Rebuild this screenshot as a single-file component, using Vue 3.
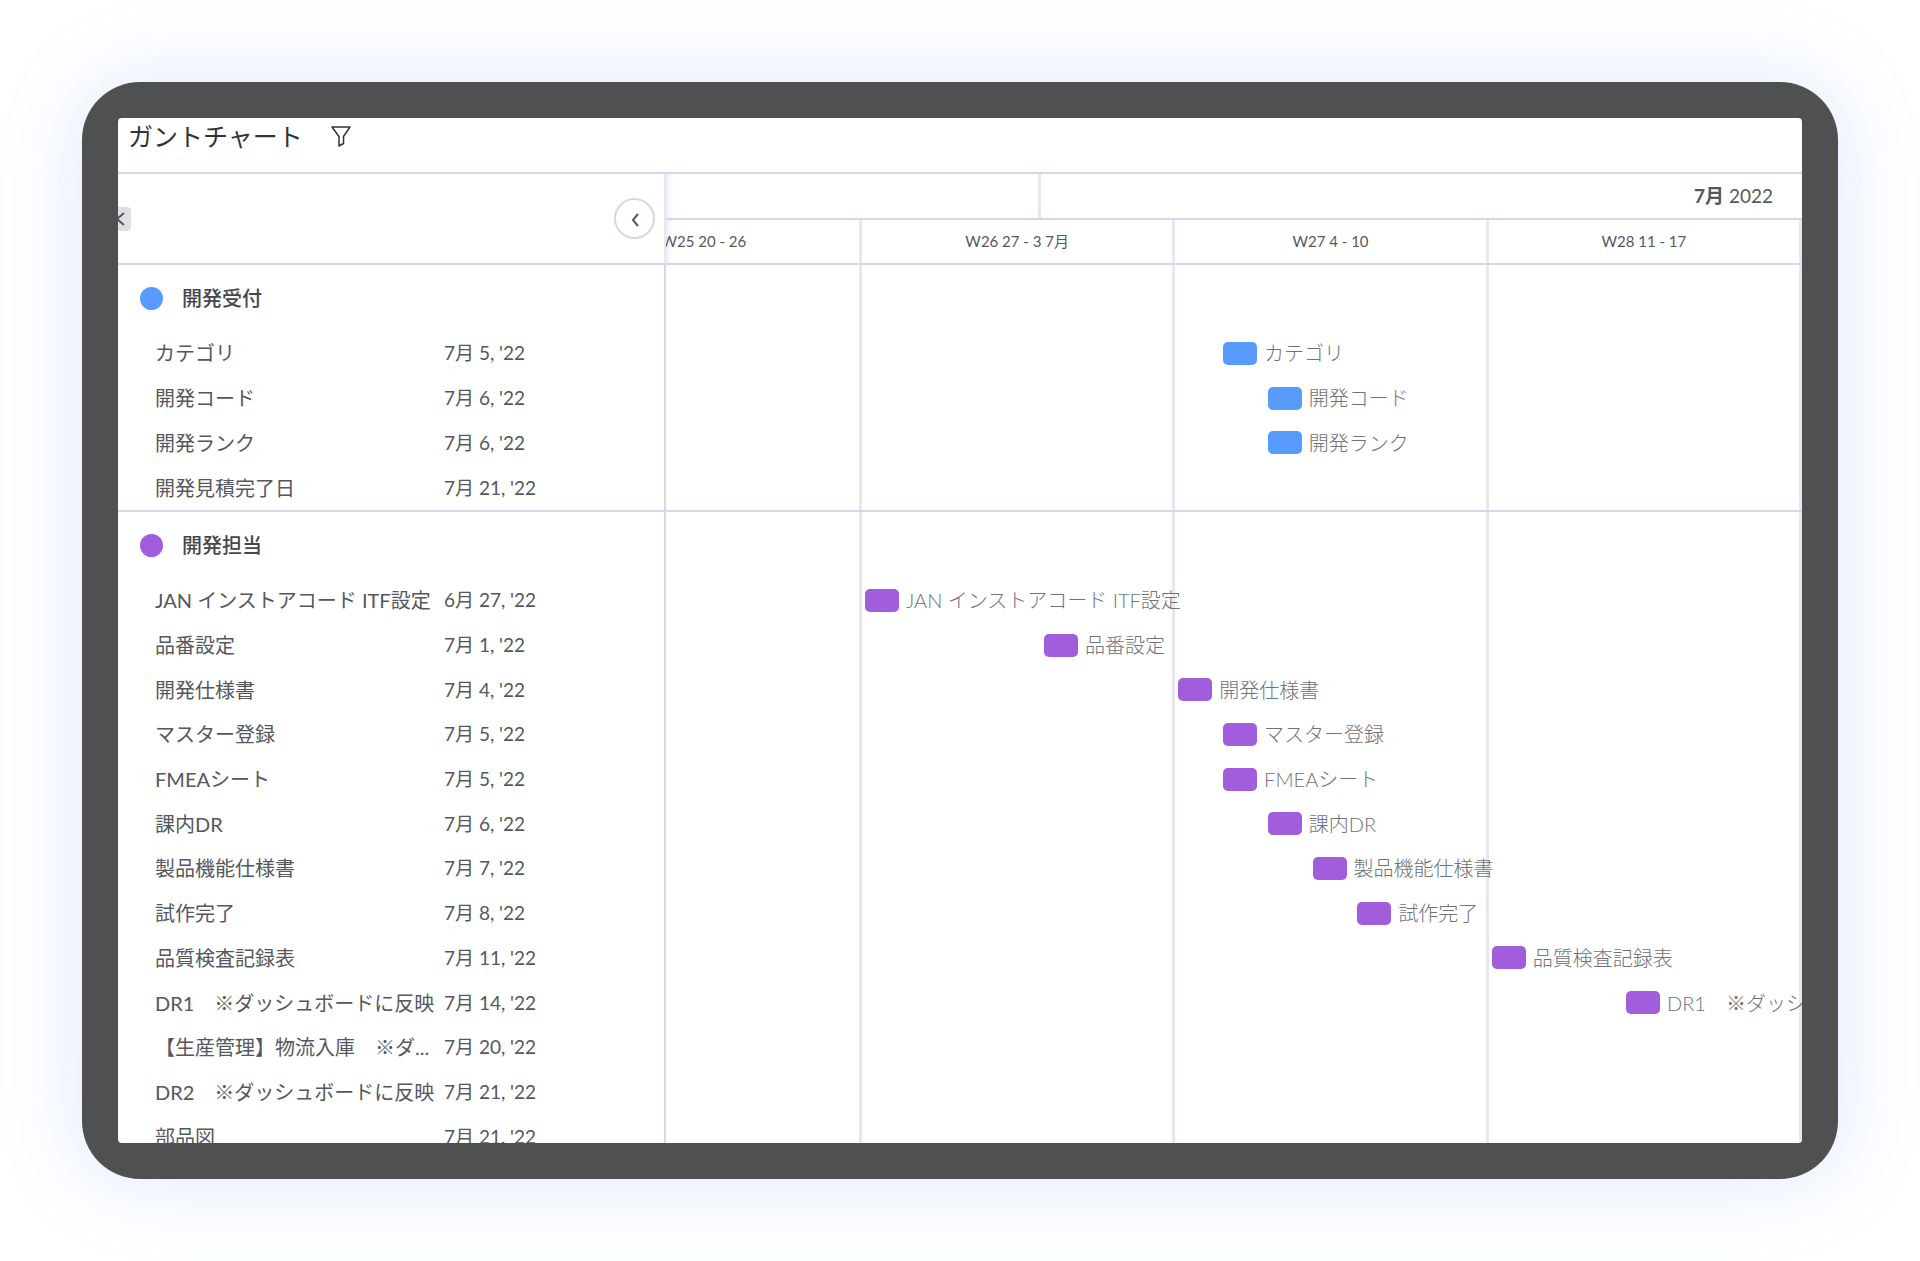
<script setup>
const FIRST_DAY = new Date(2022, 5, 27)

const weeks = ['W25 20 - 26', 'W26 27 - 3 7月', 'W27 4 - 10', 'W28 11 - 17']

const task = (name, month, day) => ({ name, month, day })

const groups = [
  {
    title: '開発受付',
    tone: 'blue',
    height: 245,
    tasks: [
      task('カテゴリ', 7, 5),
      task('開発コード', 7, 6),
      task('開発ランク', 7, 6),
      task('開発見積完了日', 7, 21)
    ]
  },
  {
    title: '開発担当',
    tone: 'purple',
    height: 649,
    tasks: [
      task('JAN インストアコード ITF設定', 6, 27),
      task('品番設定', 7, 1),
      task('開発仕様書', 7, 4),
      task('マスター登録', 7, 5),
      task('FMEAシート', 7, 5),
      task('課内DR', 7, 6),
      task('製品機能仕様書', 7, 7),
      task('試作完了', 7, 8),
      task('品質検査記録表', 7, 11),
      task('DR1　※ダッシュボードに反映', 7, 14),
      task('【生産管理】物流入庫　※ダ...', 7, 20),
      task('DR2　※ダッシュボードに反映', 7, 21),
      task('部品図', 7, 21)
    ]
  }
]

// Days between the first full week on the timeline and the task
const dayIndex = (t) => Math.round((new Date(2022, t.month - 1, t.day) - FIRST_DAY) / 86400000)
const isVisible = (t) => dayIndex(t) < 21
const barOffset = (t) => ({ marginLeft: `calc(var(--lead) + 3px + (100% - var(--lead)) * ${dayIndex(t)} / 21)` })
</script>

<template>
  <div class="page">
    <main class="device">
      <div class="screen">
        <header class="title-bar">
          <h1>ガントチャート</h1>
          <button class="filter" type="button" aria-label="フィルター">
            <svg width="20" height="22" viewBox="0 0 20 22" fill="none" stroke="currentColor" stroke-width="1.5" stroke-linejoin="round">
              <path d="M1 2h18l-6.500 9.500v7l-4.500 2.500v-9.500z" />
            </svg>
          </button>
        </header>

        <div class="chart-head">
          <div class="side-head">
            <button class="back-tab" type="button" aria-label="戻る">
              <svg width="12" height="16" viewBox="0 0 12 16" fill="none" stroke="currentColor" stroke-width="2">
                <path d="M8 2L1 8l7 6" />
              </svg>
            </button>
            <button class="collapse" type="button" aria-label="折りたたむ">
              <svg width="10" height="16" viewBox="0 0 10 16" fill="none" stroke="currentColor" stroke-width="2">
                <path d="M8 3L3 9l5 6" />
              </svg>
            </button>
          </div>
          <div class="time-head">
            <div class="months">
              <div class="month-prev"></div>
              <div class="month"><b>7月</b>&nbsp;2022</div>
            </div>
            <div class="weeks">
              <div v-for="w in weeks" :key="w" class="week">{{ w }}</div>
            </div>
          </div>
        </div>

        <div class="chart-body">
          <div class="grid-lines">
            <div class="grid-side"></div>
            <div class="weeks">
              <div v-for="w in weeks" :key="w" class="week"></div>
            </div>
          </div>
          <table>
            <tbody v-for="g in groups" :key="g.title" :class="g.tone" :style="{ height: g.height + 'px' }">
              <tr class="group-row">
                <th scope="rowgroup"><span class="dot"></span>{{ g.title }}</th>
              </tr>
              <tr v-for="t in g.tasks" :key="t.name">
                <td class="name">{{ t.name }}</td>
                <td class="date">{{ t.month }}月 {{ t.day }}, '22</td>
                <td class="track">
                  <template v-if="isVisible(t)">
                    <span class="bar" :style="barOffset(t)"></span>
                    <span class="bar-label">{{ t.name }}</span>
                  </template>
                </td>
              </tr>
            </tbody>
          </table>
        </div>
      </div>
    </main>
  </div>
</template>

<style>
body {
  margin: 0;
  background: #fff;
}
</style>

<style scoped>
* {
  box-sizing: border-box;
}

.page {
  --side: 548px;
  --names: 322px;
  --lead: 196px;
  --line: #d3d7e8;
  --soft-line: #e5e8f2;
  height: 100vh;
  padding: 82px;
  overflow: hidden;
  font-family: Lato, "Noto Sans CJK JP", sans-serif;
  color: #55575e;
}

.device {
  height: 100%;
  padding: 36px;
  border-radius: 58px;
  background: #505050;
  box-shadow: 0 0 84px rgba(90, 147, 250, 0.22);
}

.screen {
  display: flex;
  flex-direction: column;
  height: 100%;
  overflow: hidden;
  border-radius: 4px;
  background: #fff;
}

button {
  display: flex;
  align-items: center;
  justify-content: center;
  padding: 0;
  border: 0;
  background: none;
  color: #55575e;
}

.title-bar {
  display: flex;
  flex: none;
  align-items: flex-start;
  gap: 28px;
  height: 56px;
  padding-left: 10px;
  border-bottom: 2px solid var(--line);
}

h1 {
  margin: 0;
  font-size: 25px;
  font-weight: 400;
  line-height: 36px;
  color: #323338;
}

.filter {
  height: 36px;
  color: #323338;
}

.chart-head {
  display: flex;
  flex: none;
}

.side-head {
  display: flex;
  flex: none;
  align-items: center;
  justify-content: space-between;
  width: var(--side);
  height: 91px;
  padding-right: 9px;
  border-right: 2px solid var(--soft-line);
  border-bottom: 2px solid var(--line);
}

.back-tab {
  justify-content: flex-start;
  width: 13px;
  height: 24px;
  border-radius: 0 4px 4px 0;
  background: #dfe0e1;
}

.back-tab svg {
  margin-left: -2px;
}

.collapse {
  width: 41px;
  height: 41px;
  border: 2px solid var(--line);
  border-radius: 50%;
}

.time-head {
  flex: 1;
  min-width: 0;
  box-shadow: inset 6px 0 6px -4px #e6e8f0;
}

.months {
  display: flex;
  height: 46px;
  border-bottom: 2px solid var(--line);
}

.month-prev {
  width: calc(var(--lead) + (100% - var(--lead)) * 4 / 21);
  border-right: 3px solid var(--soft-line);
}

.month {
  flex: 1;
  padding-right: 29px;
  font-size: 19px;
  line-height: 44px;
  text-align: right;
}

.weeks {
  display: flex;
  justify-content: flex-end;
  flex: 1;
  min-width: 0;
  overflow: hidden;
}

.week {
  flex: 0 0 calc((100% - var(--lead)) / 3);
  border-right: 3px solid var(--soft-line);
  text-align: center;
  font-size: 15px;
  line-height: 43px;
  white-space: pre;
}

.time-head .weeks {
  height: 45px;
  border-bottom: 2px solid var(--line);
}

.chart-body {
  position: relative;
  flex: 1;
  min-height: 0;
  overflow: hidden;
}

.grid-lines {
  position: absolute;
  inset: 0;
  display: flex;
}

.grid-side {
  flex: none;
  width: var(--side);
  border-right: 2px solid var(--line);
}

table {
  position: relative;
  display: block;
}

tbody {
  display: grid;
  grid-template-rows: 66px;
  grid-auto-rows: 1fr;
}

tbody + tbody {
  border-top: 2px solid var(--line);
}

tr {
  display: flex;
  align-items: center;
}

th,
td {
  padding: 0;
  font-size: 20px;
  font-weight: 400;
  line-height: 30px;
  text-align: left;
  white-space: nowrap;
}

th {
  display: flex;
  align-items: center;
  gap: 19px;
  padding-left: 22px;
  font-weight: 500;
  color: #45474f;
}

.dot {
  width: 23px;
  height: 23px;
  border-radius: 50%;
}

.name {
  flex: none;
  width: var(--names);
  padding-left: 37px;
}

.date {
  flex: none;
  width: calc(var(--side) - var(--names));
  padding-left: 4px;
  font-size: 19px;
}

.track {
  display: flex;
  flex: 1;
  align-items: center;
  min-width: 0;
  overflow: hidden;
}

.bar {
  flex: none;
  width: 34px;
  height: 23px;
  border-radius: 5px;
}

.bar-label {
  flex: none;
  padding-left: 7px;
  font-weight: 300;
  color: #717277;
}

.blue .dot,
.blue .bar {
  background: #579bfc;
}

.purple .dot,
.purple .bar {
  background: #a25ddc;
}
</style>
